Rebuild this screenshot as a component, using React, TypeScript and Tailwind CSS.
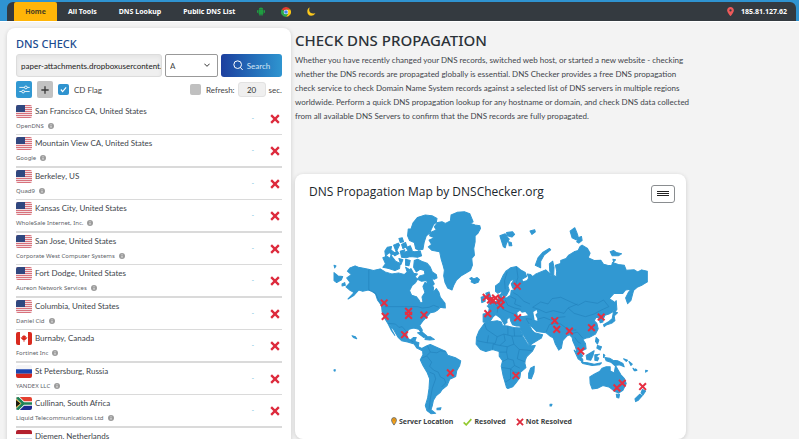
import type { ReactNode } from "react";
import { FaLocationDot } from "react-icons/fa6";

type Server = { flag: string; name: string; provider?: string };

const SERVERS: Server[] = [
  { flag: "us", name: "San Francisco CA, United States", provider: "OpenDNS" },
  { flag: "us", name: "Mountain View CA, United States", provider: "Google" },
  { flag: "us", name: "Berkeley, US", provider: "Quad9" },
  { flag: "us", name: "Kansas City, United States", provider: "WholeSale Internet, Inc." },
  { flag: "us", name: "San Jose, United States", provider: "Corporate West Computer Systems" },
  { flag: "us", name: "Fort Dodge, United States", provider: "Aureon Network Services" },
  { flag: "us", name: "Columbia, United States", provider: "Daniel Cid" },
  { flag: "ca", name: "Burnaby, Canada", provider: "Fortinet Inc" },
  { flag: "ru", name: "St Petersburg, Russia", provider: "YANDEX LLC" },
  { flag: "za", name: "Cullinan, South Africa", provider: "Liquid Telecommunications Ltd" },
  { flag: "nl", name: "Diemen, Netherlands" },
];

const FLAGS: Record<string, ReactNode> = {
  us: (
    <>
      <path fill="#f3dfe2" d="M0 0h48v39H0z" />
      <path stroke="#d8727c" strokeWidth="3" d="M0 1.5h48M0 7.5h48M0 13.5h48M0 19.5h48M0 25.5h48M0 31.5h48M0 37.5h48" />
      <path fill="#30477f" d="M0 0h27v21H0z" />
    </>
  ),
  ca: (
    <>
      <path fill="#fff" d="M0 0h48v39H0z" />
      <path fill="#d92a1f" d="M0 0h12v39H0zM36 0h12v39H36zM24 8l3 5 3-2-1 6 5-2-1 4-6 6h-2v5h-2v-5h-2l-6-6-1-4 5 2-1-6 3 2z" />
    </>
  ),
  ru: (
    <>
      <path fill="#f4f4f6" d="M0 0h48v13H0z" />
      <path fill="#1b45ae" d="M0 13h48v13H0z" />
      <path fill="#d5281f" d="M0 26h48v13H0z" />
    </>
  ),
  za: (
    <>
      <path fill="#e4402f" d="M0 0h48v20H0z" />
      <path fill="#1c2a91" d="M0 20h48v19H0z" />
      <path fill="none" stroke="#fff" strokeWidth="13" d="M0-2l22 21.500h28M0 41l22-21.500" />
      <path fill="#1b1a10" stroke="#e8b93c" strokeWidth="3" d="M-2 6l17 13.500L-2 33z" />
      <path fill="none" stroke="#1f8155" strokeWidth="8" d="M0-2l22 21.500h28M0 41l22-21.500" />
    </>
  ),
  nl: (
    <>
      <path fill="#b3202f" d="M0 0h48v13H0z" />
      <path fill="#fff" d="M0 13h48v13H0z" />
      <path fill="#2b4a94" d="M0 26h48v13H0z" />
    </>
  ),
};

function Flag({ code }: { code: string }) {
  return (
    <svg viewBox="0 0 48 39" className="h-[13px] w-4 shrink-0 rounded-[2px]" aria-hidden="true">
      {FLAGS[code]}
    </svg>
  );
}

function Cross({ className }: { className: string }) {
  return (
    <svg viewBox="0 0 26 26" className={className} aria-hidden="true">
      <path d="M3 3l20 20M23 3L3 23" stroke="#dd2a3c" strokeWidth="6" />
    </svg>
  );
}

function InfoIcon() {
  return (
    <svg viewBox="0 0 18 18" className="size-1.5 shrink-0" aria-hidden="true">
      <circle cx="9" cy="9" r="9" fill="#9c9c9c" />
      <path d="M9 4v2M9 8v6" stroke="#fff" strokeWidth="2.500" />
    </svg>
  );
}

function AndroidIcon() {
  return (
    <svg viewBox="0 0 24 27" className="h-[9px] w-2" aria-hidden="true">
      <g fill="#1f9c41">
        <path d="M5 8a7 6.500 0 0 1 14 0zM5 9h14v11a1.500 1.500 0 0 1-1.500 1.500h-11A1.500 1.500 0 0 1 5 20z" />
        <rect x="0" y="9" width="4" height="9" rx="2" />
        <rect x="20" y="9" width="4" height="9" rx="2" />
        <rect x="7" y="18" width="4" height="8" rx="2" />
        <rect x="13" y="18" width="4" height="8" rx="2" />
      </g>
    </svg>
  );
}

function ChromeIcon() {
  return (
    <svg viewBox="0 0 30 30" className="size-2.5" aria-hidden="true">
      <path fill="#e33b2e" d="M15 15L2 7.500A15 15 0 0 1 28 7.500H15z" />
      <path fill="#f9c513" d="M15 15V7.500h13A15 15 0 0 1 15 30l6.500-11z" />
      <path fill="#2da94f" d="M15 15l6.500 3.700L15 30A15 15 0 0 1 2 7.500z" />
      <circle cx="15" cy="15" r="7" fill="#fff" />
      <circle cx="15" cy="15" r="5.500" fill="#3f83ee" />
    </svg>
  );
}

const LAND = [
  // Greenland
  "M300 82L318 75 312 65 322 52 335 50 345 55 360 48 362 30 380 22 402 20 418 26 424 40 428 50 420 55 434 60 448 62 450 70 442 85 434 92 434 110 430 130 432 150 424 160 426 180 420 195 404 205 392 212 378 225 370 240 365 254 352 248 344 232 340 212 342 195 338 180 332 160 328 140 304 135 294 125 304 118 296 105 312 98 298 92Z",
  // Iceland
  "M418 220L424 217 430 221 440 217 447 223 443 231 432 235 422 230 424 225Z",
  // Arctic islands
  "M242 72L248 54 262 37 285 30 305 32 320 40 318 52 310 58 304 70 298 84 288 92 282 110 278 132 264 135 256 130 252 112 238 106 232 92 234 72Z",
  "M206 100L216 98 220 110 210 112ZM164 138L172 126 184 124 182 134 192 142 184 150 178 142 166 152ZM190 120L204 114 208 120 200 136 206 145 194 152 188 146 198 140ZM214 118L226 112 230 124 218 130ZM228 128L240 122 246 136 238 144ZM210 138L224 134 220 142 238 136 252 140 270 138 274 152 262 156 240 154 228 158 214 156Z",
  "M158 158L170 153 180 160 182 150 190 160 196 168 210 175 208 190 194 196 176 190 158 186 166 176ZM206 160L218 164 212 178ZM226 162L240 166 236 182 226 180ZM226 186L236 192 230 198Z",
  "M252 166L262 162 278 170 290 174 300 186 306 200 318 208 320 218 312 222 304 220 312 236 304 244 292 232 288 226 274 228 262 222 268 212 284 208 282 196 270 192 258 200 250 186Z",
  // North America
  "M60 188L75 182 85 186 115 192 130 196 150 191 165 200 185 206 205 203 222 208 234 198 242 190 250 204 262 206 254 214 262 222 256 232 246 240 238 256 244 270 258 274 266 284 271 294 278 290 275 275 284 262 278 244 284 232 300 238 310 246 308 262 318 250 326 262 330 276 344 294 345 308 330 306 322 314 312 320 300 322 290 334 280 344 268 360 276 374 274 384 266 372 250 368 236 372 230 380 230 396 240 404 250 396 258 396 254 408 266 412 264 424 276 430 290 424 290 432 276 436 260 428 252 416 232 410 214 406 204 396 190 372 178 358 186 376 194 390 184 376 174 356 163 338 156 320 154 300 142 284 136 266 126 258 114 254 98 258 86 254 72 270 54 281 72 262 60 255 48 245 60 232 50 218 64 208 52 198Z",
  // Aleutian fragments and Hawaii
  "M12 202L24 212 38 214 34 224 20 232 12 226ZM12 180L18 182 14 188ZM66 391L76 394 80 400 70 396ZM12 493L16 493 15 497 12 496ZM36 236L44 232 46 240 36 242Z",
  // Newfoundland and the Caribbean
  "M328 298L336 290 344 300 338 308ZM262 382L276 380 290 392 280 396ZM286 394L300 394 312 402 298 404 284 402Z",
  // South America
  "M276 428L290 421 300 417 320 426 345 437 352 449 375 457 391 466 388 480 379 496 376 513 358 521 350 540 336 551 330 560 318 570 309 585 306 600 302 612 316 623 302 624 290 615 285 600 292 577 296 550 298 520 290 500 278 480 270 463 278 448ZM320 608L332 606 330 612 320 612Z",
  // Britain and Ireland
  "M466 264L476 260 480 274 490 286 494 294 474 298 480 284 472 278ZM452 276L464 272 464 288 454 292Z",
  // Svalbard, Franz Josef, Novaya Zemlya, Severnaya Zemlya
  "M508 92L524 86 530 96 536 102 528 114 524 128 518 124ZM528 82L546 80 552 88 544 96 530 92ZM534 110L542 112 544 122 536 122ZM598 78L612 74 614 80 604 88Z",
  "M614 180L622 158 636 142 656 130 660 134 640 150 630 168 630 188ZM718 78L732 68 738 82 742 94 736 104 724 98ZM742 98L752 94 754 106 744 114 738 110ZM838 140L848 136 856 142 872 146 862 152 844 152ZM846 162L854 164 848 170Z",
  // Eurasia
  "M495 258L495 242 508 232 518 210 526 198 540 188 558 184 570 194 584 202 588 214 574 222 576 230 590 226 594 218 590 206 600 208 606 214 616 206 630 200 645 194 656 204 662 214 657 196 656 176 666 168 670 186 669 210 676 216 678 198 674 180 690 175 690 166 706 160 714 150 730 140 742 136 748 124 754 120 770 130 778 144 772 158 790 166 810 165 818 177 830 180 842 182 845 172 862 178 880 180 886 195 910 194 920 200 932 194 949 198 949 230 934 239 920 245 908 255 900 285 890 295 884 278 892 262 900 252 884 254 875 265 850 264 835 280 850 290 852 304 848 318 834 326 822 330 818 340 816 350 808 352 804 338 796 336 790 346 798 354 802 370 794 386 776 396 766 398 756 402 764 414 766 430 754 436 744 426 740 418 744 434 756 452 750 454 738 438 734 424 726 406 724 396 716 388 708 392 696 406 692 428 684 434 674 416 668 398 658 392 646 382 618 378 606 366 594 356 604 374 612 382 636 388 632 398 606 414 598 420 588 404 572 378 568 362 558 362 546 358 540 346 538 336 530 340 528 352 516 340 506 328 520 338 530 350 522 358 510 338 496 328 488 334 480 346 470 352 458 350 458 326 474 324 476 308 470 302 484 298 494 290 504 284 506 270 514 264 514 276 528 278 540 270 542 256 558 252 546 248 542 236 552 222 540 226 532 242 536 254 528 270 520 276 512 258 502 264Z",
  // Africa
  "M462 354L474 350 500 346 512 350 516 360 530 362 550 366 568 368 576 392 590 414 596 422 614 420 606 436 588 454 582 470 586 486 570 500 568 516 556 532 546 544 532 549 528 546 518 512 512 482 516 466 506 452 506 438 486 432 466 438 450 432 437 416 438 396 446 376ZM600 488L611 482 610 500 602 520 594 518 594 504Z",
  // Japan
  "M850 296L856 286 858 312 852 320 850 306ZM848 318L860 322 850 332 852 346 842 354 828 358 820 364 818 358 832 350 844 340Z",
  // South-east Asia
  "M730 434L744 446 756 462 756 470 742 460ZM752 470L770 472 790 476 812 472 806 478 784 480 756 474ZM766 450L780 442 790 436 786 452 780 464 768 462ZM796 396L804 404 800 416 794 408ZM800 420L812 424 808 434 798 428ZM792 448L806 446 796 452 804 458 800 466 792 464ZM818 446L822 450 818 456Z",
  "M822 456L836 458 846 464 860 466 876 474 880 484 866 478 852 480 840 470 826 466ZM878 460L890 464 886 468ZM894 468L904 476 900 480ZM906 488L914 494 910 496ZM914 490L918 494 914 496ZM944 494L950 496 944 500Z",
  // Australia
  "M777 514L790 506 806 498 814 488 826 484 838 484 838 496 850 502 854 480 862 494 870 508 881 520 886 534 876 554 864 562 852 558 842 550 834 544 816 540 800 548 784 550 778 534ZM856 566L866 566 864 577 858 576Z",
  // New Zealand
  "M934 552L944 556 936 568 930 562ZM926 566L934 570 922 584 914 588 912 580ZM658 596L664 596 662 601 658 601Z",
];

const INLAND_WATER = [
  "M560 322L568 316 574 322 584 320 592 330 578 332 562 332Z",
  "M608 320L618 314 620 322 614 328 620 340 620 346 612 344 610 332Z",
];

const BORDERS = [
  "M116 193V254L136 264 154 302M164 304H262L276 308 296 306 310 300 326 306",
  "M174 354L196 356 206 366 216 364 230 380M240 404L250 410M292 422L300 440 320 442 330 436 346 438M300 440L288 452 274 458M290 452L304 470 298 482 310 494 324 500 330 514 342 520 346 532 334 544M298 500L312 506 316 520 306 548 300 580 296 612",
  "M530 200L522 226 524 252M558 186L562 216 556 236M548 262L562 270 580 288 598 296M540 274L556 282 552 296 572 304M524 284L532 300 552 308 570 312M492 294L502 304 500 322M514 310L530 318 550 326M606 306L630 290 652 296 664 280 690 276 720 290 742 300 764 288 800 294 818 284 834 304 812 314 790 326 764 334 730 324 712 308 740 296",
  "M606 306L624 312 646 322 668 316 700 324 712 308M620 342L640 336 660 344 684 336 704 334M646 380L656 358 672 354 690 356 714 374 736 374M596 356L586 340 604 342M718 386L740 380 756 398M732 396L742 410 750 414",
  "M462 354L468 372 500 394 520 386 544 392 574 392M474 390L470 412 440 406M500 394L494 414 470 412M520 386L524 406 508 420 488 416 486 432M544 392L550 416 530 424 508 420M550 416L566 432 588 434 606 436M530 424L528 440 506 440M566 432L560 460 586 470M528 440L532 460 516 468M532 460L548 464 552 480 568 488M514 486L540 490 550 500 568 502M540 490V520L524 530M552 480L540 490M532 362L532 388M550 366L552 392",
];

const MARKERS: [number, number][] = [
  [162, 293], [165, 333], [235, 318], [235, 330], [281, 329], [223, 388], [360, 502],
  [467, 276], [480, 284], [488, 286], [495, 278], [512, 283], [510, 300], [472, 325],
  [560, 243], [561, 337], [672, 346], [678, 372], [716, 377], [556, 510], [750, 437],
  [782, 367], [811, 335], [874, 533], [858, 547], [935, 543],
];

function WorldMap() {
  return (
    <svg viewBox="0 0 960 630" className="block w-full" role="img" aria-label="World map">
      <path d={LAND.join("")} fill="#3198d2" stroke="#3198d2" strokeWidth="3" strokeLinejoin="round" />
      <path d={INLAND_WATER.join("")} fill="#fff" />
      <path d={BORDERS.join("")} fill="none" stroke="#2383bd" strokeWidth="2" strokeLinejoin="round" />
      {MARKERS.map(([x, y]) => (
        <path
          key={`${x}-${y}`}
          d={`M${x - 10} ${y - 10}l20 20m0-20l-20 20`}
          stroke="#e52f42"
          strokeWidth="6"
        />
      ))}
    </svg>
  );
}

function Header() {
  return (
    <header className="border-b border-white bg-[#2f93d1] pt-0.5 pr-[3px] pl-[7px]">
      <nav className="flex h-[19px] items-center rounded-t-md bg-[#343a40] pr-[9px] pl-[7px] font-['Noto_Sans',sans-serif] text-[7px] font-bold text-white">
        <a href="#home" className="flex h-full w-[43px] items-center justify-center rounded-t-[2px] bg-[#ffb508] text-[#4b4021]">
          Home
        </a>
        <div className="ml-[11px] flex items-center gap-[22px]">
          <a href="#tools">All Tools</a>
          <a href="#lookup">DNS Lookup</a>
          <a href="#list">Public DNS List</a>
        </div>
        <div className="ml-[22px] flex items-center gap-4">
          <a href="#android" aria-label="Android app">
            <AndroidIcon />
          </a>
          <a href="#chrome" aria-label="Chrome extension">
            <ChromeIcon />
          </a>
          <button type="button" aria-label="Dark mode">
            <svg viewBox="0 0 30 30" className="size-[9px]" aria-hidden="true">
              <path fill="#fcc81c" d="M9 2C3 16 14 26 28 20 25 27 19 29 14 29 6 29 1 23 1 15 1 9 4 4 9 2z" />
            </svg>
          </button>
        </div>
        <div className="ml-auto flex items-center gap-1.5">
          <FaLocationDot className="size-[9px] text-[#ee5a5a]" />
          <span>185.81.127.62</span>
        </div>
      </nav>
    </header>
  );
}

function SearchForm() {
  return (
    <form onSubmit={(e) => e.preventDefault()}>
      <div className="flex gap-[3px]">
        <input
          aria-label="Domain name"
          defaultValue="paper-attachments.dropboxusercontent."
          className="h-[23px] min-w-0 flex-1 rounded-[3px] border border-[#dcdcdc] bg-[#efefef] pl-1 text-[8px] text-[#222] shadow-inner outline-none"
        />
        <div className="relative w-[53px]">
          <select
            aria-label="Record type"
            className="h-[23px] w-full appearance-none rounded-[2px] border border-[#999] bg-white pl-1 text-[8px] text-[#444]"
          >
            <option>A</option>
          </select>
          <svg viewBox="0 0 18 12" className="pointer-events-none absolute top-[9px] right-2 h-1 w-1.5" aria-hidden="true">
            <path d="M1 2l8 8 8-8" fill="none" stroke="#333" strokeWidth="3" />
          </svg>
        </div>
        <button
          type="submit"
          className="flex h-[23px] w-[61px] items-center justify-center gap-1 rounded-[3px] bg-linear-to-r from-[#1d3f9e] to-[#2f95d0] text-[8px] text-[#d4e6f5]"
        >
          <svg viewBox="0 0 30 33" className="h-[11px] w-2.5" aria-hidden="true">
            <circle cx="14" cy="14" r="11.500" fill="none" stroke="#fff" strokeWidth="3" />
            <path d="M22 22l7 8" stroke="#fff" strokeWidth="3" />
          </svg>
          Search
        </button>
      </div>
      <div className="mt-1 flex h-[17px] items-center text-[8px] text-[#444]">
        <button type="button" aria-label="Options" className="flex h-[17px] w-4 items-center justify-center rounded-[2px] bg-[#3198d2]">
          <svg viewBox="0 0 32 26" className="w-[11px]" aria-hidden="true">
            <g fill="none" stroke="#fff" strokeWidth="2.500">
              <path d="M1 7h15M24 7h7M1 19h7M16 19h15" />
              <circle cx="20" cy="7" r="4" />
              <circle cx="12" cy="19" r="4" />
            </g>
          </svg>
        </button>
        <button type="button" aria-label="Add" className="ml-[5px] flex h-[17px] w-4 items-center justify-center rounded-[2px] bg-[#c2c2c2]">
          <svg viewBox="0 0 24 24" className="size-2" aria-hidden="true">
            <path d="M12 1v22M1 12h22" stroke="#3a3a3a" strokeWidth="4" />
          </svg>
        </button>
        <label className="ml-[5px] flex items-center gap-[5px]">
          <span className="relative flex size-[11px]">
            <input type="checkbox" defaultChecked className="size-[11px] appearance-none rounded-[2px] bg-[#2f93cf]" />
            <svg viewBox="0 0 24 24" className="pointer-events-none absolute inset-0.5 size-[7px]" aria-hidden="true">
              <path d="M3 12l6 7L21 5" fill="none" stroke="#fff" strokeWidth="4" />
            </svg>
          </span>
          CD Flag
        </label>
        <label className="ml-auto flex items-center gap-[5px]">
          <input type="checkbox" className="size-[11px] appearance-none rounded-[2px] bg-[#c0c0c0]" />
          Refresh:
        </label>
        <input
          aria-label="Refresh seconds"
          defaultValue="20"
          className="mx-[3px] h-[15px] w-7 rounded-[3px] border border-[#e2e2e2] bg-[#efefef] text-center text-[8px] text-[#333] outline-none"
        />
        sec.
      </div>
    </form>
  );
}

function ServerRow({ server }: { server: Server }) {
  return (
    <li className="flex items-center border-b border-[#dadada] even:border-b-2">
      <div className="flex-1">
        <div className="flex h-4 items-center gap-[3px] text-[8px] text-[#40454b]">
          <Flag code={server.flag} />
          {server.name}
        </div>
        <div className="flex h-[15px] items-start gap-1 pt-1 font-['Noto_Sans',sans-serif] text-[6px] leading-[7px] text-[#5d6267]">
          {server.provider}
          {server.provider && <InfoIcon />}
        </div>
      </div>
      <span className="mr-4 text-[7px] text-[#79c3e0]">-</span>
      <Cross className="mr-0.5 size-2.5" />
    </li>
  );
}

function MapCard() {
  return (
    <section className="mt-[51px] rounded-lg bg-white shadow-[0_1px_4px_rgba(0,0,0,0.16)]">
      <div className="flex h-[31px] items-start justify-between pt-[11px] pr-[11px] pl-3.5">
        <h2 className="font-['Open_Sans',sans-serif] text-[12px] leading-[14px] font-medium text-[#20262c]">DNS Propagation Map by DNSChecker.org</h2>
        <button type="button" aria-label="Map menu" className="flex h-[18px] w-6 items-center justify-center rounded-[3px] border border-[#8a8d90]">
          <svg viewBox="0 0 12 6" className="h-1.5 w-3" aria-hidden="true">
            <path d="M0 .5h12M0 2.5h12M0 4.5h12" stroke="#222" strokeWidth="1" />
          </svg>
        </button>
      </div>
      <div className="px-[35px]">
        <WorldMap />
      </div>
      <ul className="flex h-[23px] items-start justify-center gap-2.5 pt-px pr-[18px] font-['Noto_Sans',sans-serif] text-[7px] leading-[10px] font-bold text-[#3c3f43]">
        <li className="flex items-center gap-0.5">
          <svg viewBox="0 0 20 28" className="h-[9px] w-1.5" aria-hidden="true">
            <path d="M10 26C4 18 2 14 2 9a8 8 0 0 1 16 0c0 5-2 9-8 17z" fill="#f6a31b" stroke="#4c5b6b" strokeWidth="2.500" />
            <circle cx="10" cy="9" r="3" fill="#d98a10" />
          </svg>
          Server Location
        </li>
        <li className="flex items-center gap-0.5">
          <svg viewBox="0 0 28 24" className="h-2 w-[9px]" aria-hidden="true">
            <path d="M2 13l8 8L26 3" fill="none" stroke="#93c92f" strokeWidth="5" />
          </svg>
          Resolved
        </li>
        <li className="flex items-center gap-0.5">
          <Cross className="size-2" />
          Not Resolved
        </li>
      </ul>
    </section>
  );
}

export default function App() {
  return (
    <div className="h-screen overflow-hidden bg-[#f3f3f3] font-['Lato','Noto_Sans',sans-serif] leading-none">
      <Header />
      <main className="flex items-start gap-1 pt-1.5 pl-[7px]">
        <section className="w-[284px] shrink-0 rounded-lg bg-white px-[9px] pt-2.5 shadow-[0_1px_4px_rgba(0,0,0,0.16)]">
          <h2 className="mb-1 font-['Noto_Sans',sans-serif] text-[11px] leading-3 font-medium text-[#1b4b8f]">DNS CHECK</h2>
          <SearchForm />
          <ul className="mt-[5px]">
            {SERVERS.map((server) => (
              <ServerRow key={server.name} server={server} />
            ))}
          </ul>
        </section>
        <div className="max-w-[391px] min-w-0 flex-1 pt-1">
          <h1 className="font-['Noto_Sans',sans-serif] text-[15px] leading-4 font-medium text-[#2b3238]">CHECK DNS PROPAGATION</h1>
          <p className="mt-[5px] text-[8px] leading-[14px] whitespace-nowrap text-[#3f454b]">
            Whether you have recently changed your DNS records, switched web host, or started a new website - checking
            <br />
            whether the DNS records are propagated globally is essential. DNS Checker provides a free DNS propagation
            <br />
            check service to check Domain Name System records against a selected list of DNS servers in multiple regions
            <br />
            worldwide. Perform a quick DNS propagation lookup for any hostname or domain, and check DNS data collected
            <br />
            from all available DNS Servers to confirm that the DNS records are fully propagated.
          </p>
          <MapCard />
        </div>
      </main>
    </div>
  );
}
